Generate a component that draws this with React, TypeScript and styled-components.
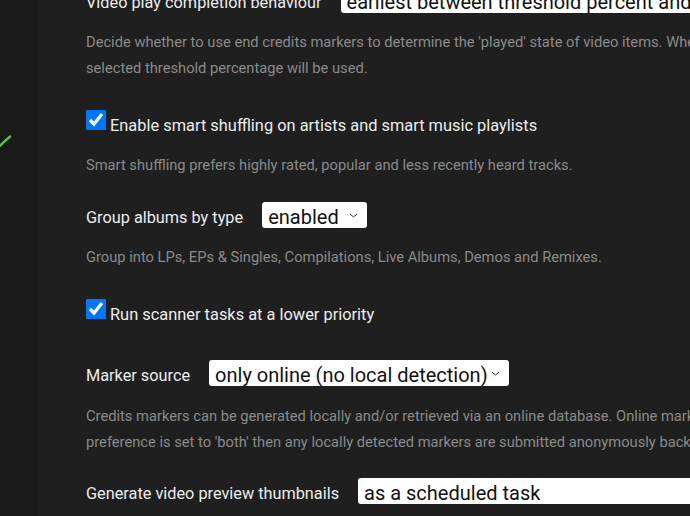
import styled, { createGlobalStyle } from "styled-components";

const GlobalStyle = createGlobalStyle`
  html, body {
    margin: 0;
    padding: 0;
    background: #1f1f1f;
    overflow: hidden;
  }
  body {
    font-family: Roboto, "Noto Sans", sans-serif;
  }
`;

interface GroupProps {
  $gap: number;
}

interface SelectProps {
  $width: number;
}

interface DescriptionProps {
  $top?: number;
}

const Page = styled.div`
  display: flex;
  width: 690px;
  height: 516px;
  overflow: hidden;
  background: #1f1f1f;
`;

const Sidebar = styled.aside`
  flex: 0 0 38px;
  background: #1a1a1a;
  padding-top: 135px;
  box-sizing: border-box;

  svg {
    display: block;
  }
`;

const Content = styled.main`
  flex: 1;
  min-width: 0;
  padding-left: 48px;
  margin-top: -13px;
`;

const Group = styled.section<GroupProps>`
  margin-top: ${(props) => props.$gap}px;
`;

const SelectRow = styled.div`
  display: flex;
  align-items: flex-end;
  gap: 19px;
  white-space: nowrap;
`;

const Label = styled.label`
  font-size: 16.3px;
  line-height: 20px;
  color: #ededed;
`;

const SelectWrap = styled.div`
  position: relative;
  flex: none;

  svg {
    position: absolute;
    right: 9px;
    top: 11px;
    pointer-events: none;
  }
`;

const Select = styled.select<SelectProps>`
  appearance: none;
  display: block;
  box-sizing: border-box;
  width: ${(props) => props.$width}px;
  height: 26px;
  padding: 3px 18px 0 6px;
  border: none;
  border-radius: 3px;
  background: #ffffff;
  color: #111111;
  font-family: Roboto, "Noto Sans", sans-serif;
  font-size: 20px;
  outline: none;
`;

const CheckRow = styled.div`
  display: flex;
  align-items: flex-start;
  gap: 4px;
  padding-top: 4px;
`;

const Checkbox = styled.input`
  width: 20px;
  height: 20px;
  margin: 0;
  flex: none;
  accent-color: #0075ff;
`;

const CheckLabel = styled.label`
  margin-top: 6px;
  font-size: 16.4px;
  line-height: 20px;
  color: #ededed;
`;

const Description = styled.p<DescriptionProps>`
  margin: ${(props) => props.$top ?? 17}px 0 0;
  font-size: 14.7px;
  line-height: 25.5px;
  color: #8a8a8a;
  white-space: nowrap;
`;

const Chevron = () => (
  <svg width="9" height="5" viewBox="0 0 9 5" fill="none">
    <path d="M1 1l3.5 3L8 1" stroke="#333" strokeWidth="1" />
  </svg>
);

const SelectSetting = ({
  label,
  value,
  width,
}: {
  label: string;
  value: string;
  width: number;
}) => (
  <SelectRow>
    <Label>{label}</Label>
    <SelectWrap>
      <Select $width={width} defaultValue={value}>
        <option value={value}>{value}</option>
      </Select>
      <Chevron />
    </SelectWrap>
  </SelectRow>
);

const CheckSetting = ({ label }: { label: string }) => (
  <CheckRow>
    <Checkbox type="checkbox" defaultChecked />
    <CheckLabel>{label}</CheckLabel>
  </CheckRow>
);

const App = () => {
  return (
    <>
      <GlobalStyle />
      <Page>
        <Sidebar>
          <svg width="12" height="12" viewBox="0 0 12 12">
            <path d="M-1 11.5L10 1.5" stroke="#5cbf4a" strokeWidth="2.5" strokeLinecap="round" />
          </svg>
        </Sidebar>
        <Content>
          <Group $gap={0}>
            <SelectSetting
              label="Video play completion behaviour"
              value="earliest between threshold percent and end credits marker"
              width={560}
            />
            <Description>
              Decide whether to use end credits markers to determine the 'played' state of video items. When
              <br />
              selected threshold percentage will be used.
            </Description>
          </Group>

          <Group $gap={25}>
            <CheckSetting label="Enable smart shuffling on artists and smart music playlists" />
            <Description>
              Smart shuffling prefers highly rated, popular and less recently heard tracks.
            </Description>
          </Group>

          <Group $gap={23}>
            <SelectSetting label="Group albums by type" value="enabled" width={105} />
            <Description>
              Group into LPs, EPs &amp; Singles, Compilations, Live Albums, Demos and Remixes.
            </Description>
          </Group>

          <Group $gap={25}>
            <CheckSetting label="Run scanner tasks at a lower priority" />
          </Group>

          <Group $gap={35}>
            <SelectSetting
              label="Marker source"
              value="only online (no local detection)"
              width={300}
            />
            <Description $top={18}>
              Credits markers can be generated locally and/or retrieved via an online database. Online markers
              <br />
              preference is set to 'both' then any locally detected markers are submitted anonymously back to
            </Description>
          </Group>

          <Group $gap={23}>
            <SelectSetting
              label="Generate video preview thumbnails"
              value="as a scheduled task"
              width={420}
            />
          </Group>
        </Content>
      </Page>
    </>
  );
};

export default App;
